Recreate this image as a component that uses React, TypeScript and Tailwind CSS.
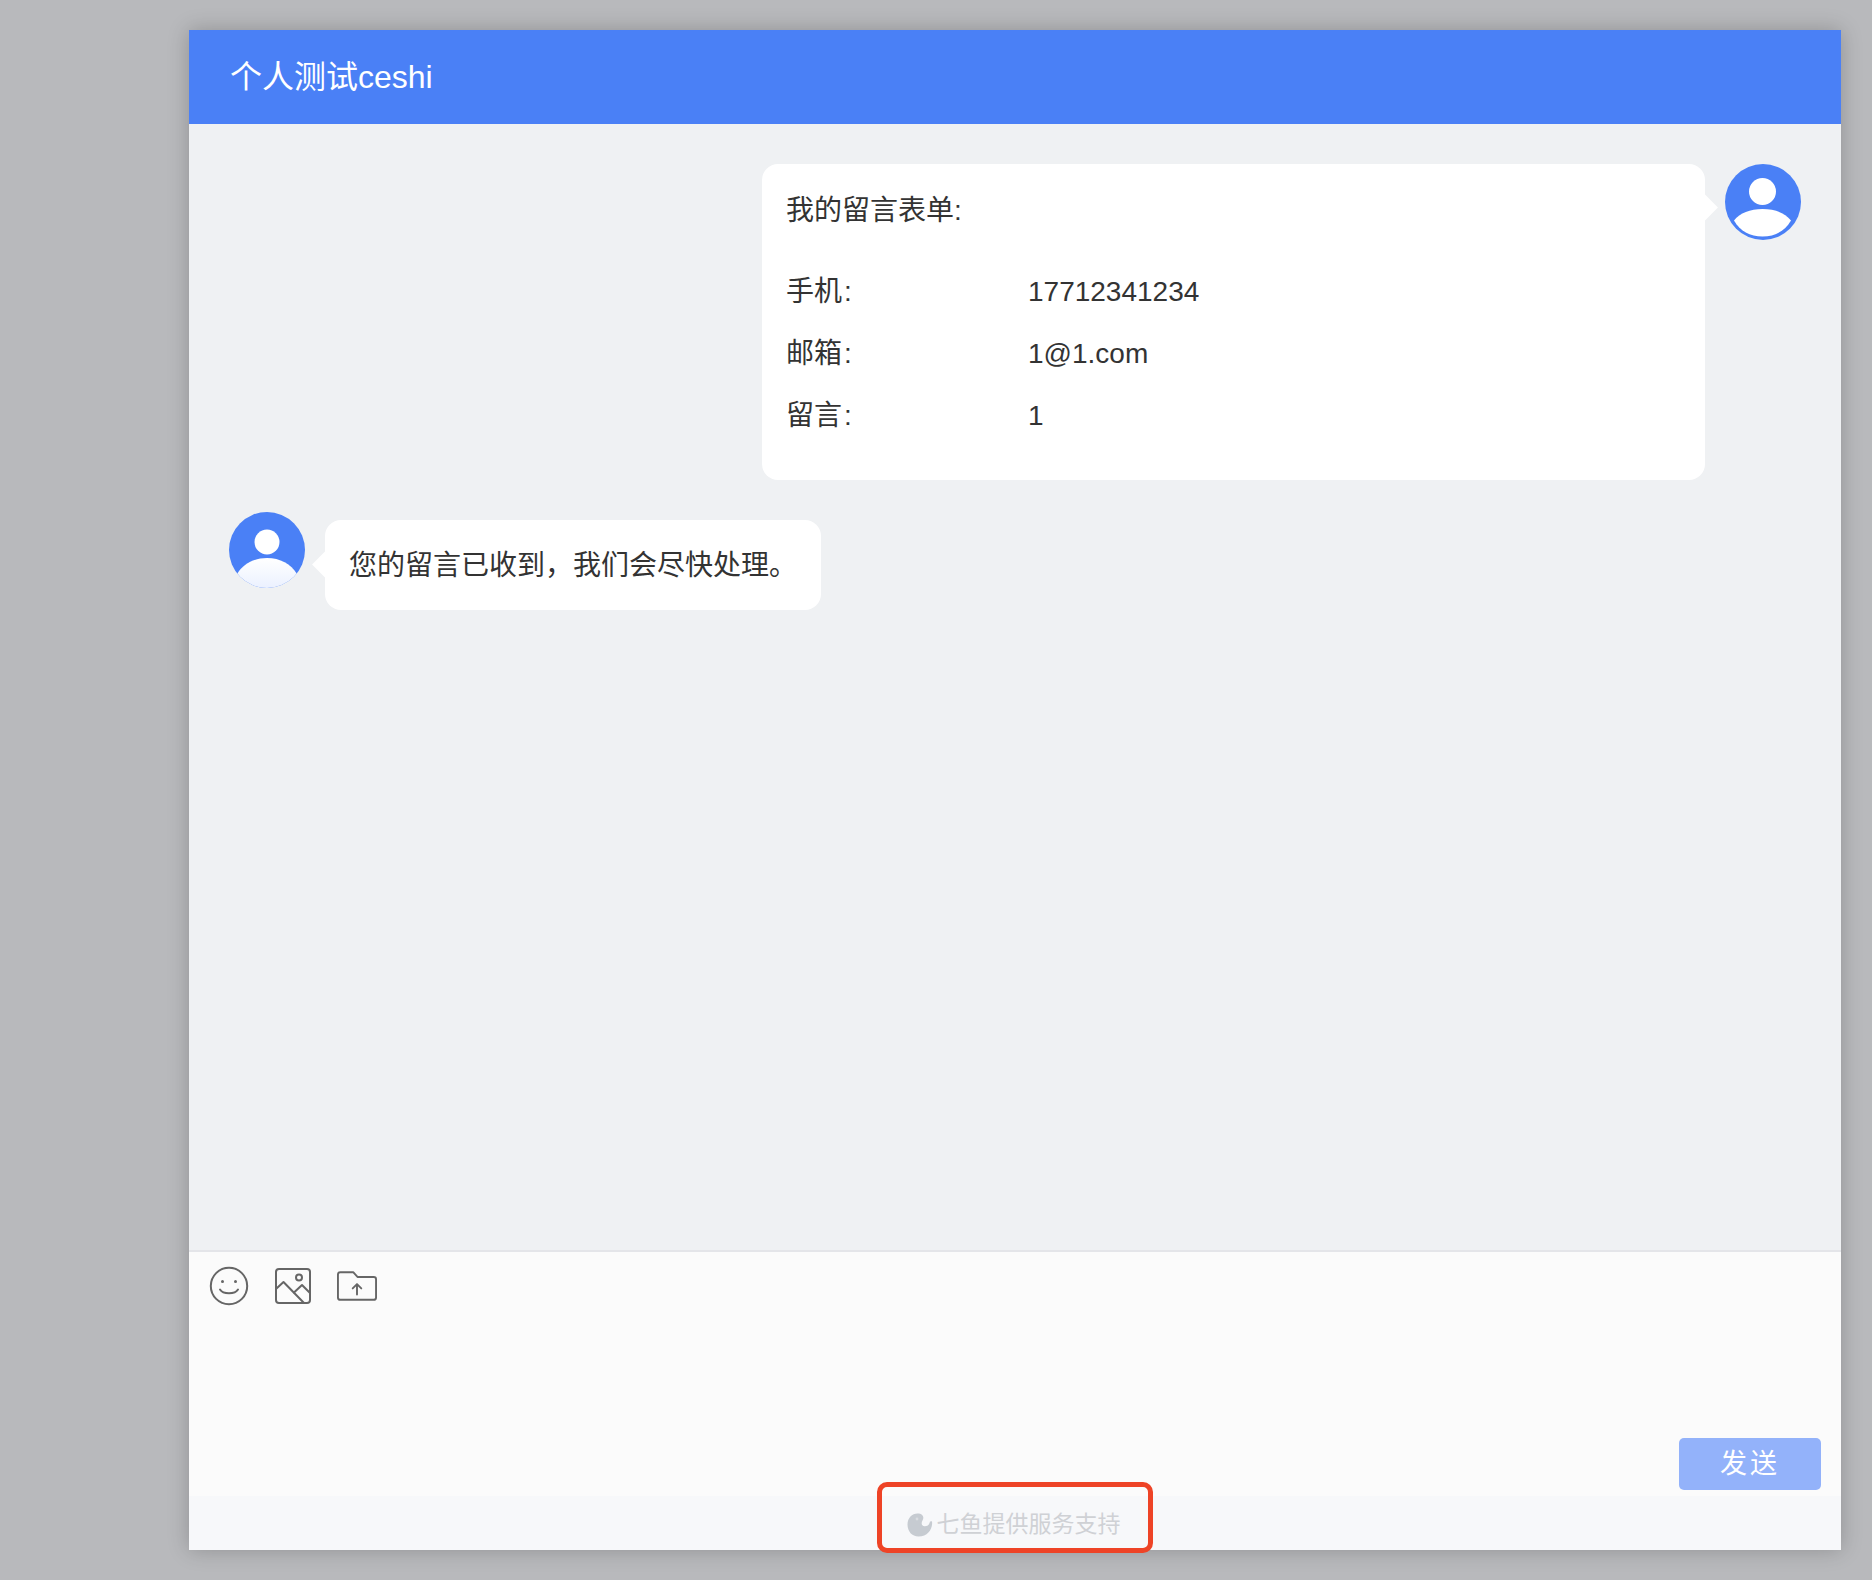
const FONT = "font-['Liberation_Sans','Noto_Sans_CJK_SC',sans-serif]";

function Avatar({ sent }: { sent?: boolean }) {
  return (
    <svg viewBox="0 0 76 76" className="w-[76px] h-[76px] shrink-0">
      <defs>
        <linearGradient id="body-fade" x1="0" y1="0" x2="0" y2="1">
          <stop offset="0" stopColor="#ffffff" />
          <stop offset="1" stopColor="#ebf1ff" />
        </linearGradient>
        <clipPath id="circle-clip">
          <circle cx="38" cy="38" r="38" />
        </clipPath>
      </defs>
      <circle cx="38" cy="38" r="38" fill="#4a80f6" />
      {sent ? (
        <>
          <circle cx="37.5" cy="27.5" r="13.5" fill="#fff" />
          <path d="M9 56.5C15 49 25 45 37.5 45S60 49 66 56.5C60 67 50 72.5 37.5 72.5S15 67 9 56.5Z" fill="#fff" />
        </>
      ) : (
        <>
          <circle cx="38" cy="30" r="12.5" fill="#fff" />
          <path
            d="M8 62C14 52 25 46 38 46S62 52 68 62V76H8Z"
            fill="url(#body-fade)"
            clipPath="url(#circle-clip)"
          />
        </>
      )}
    </svg>
  );
}

function FormRow({ label, value }: { label: string; value: string }) {
  return (
    <div className="flex h-[62px] items-center">
      <span className="w-[242px] shrink-0">
        {label}
        <span className="ml-[2px]">:</span>
      </span>
      <span>{value}</span>
    </div>
  );
}

function SmileIcon() {
  return (
    <svg viewBox="0 0 40 40" className="w-10 h-10" fill="none" stroke="#666" strokeWidth="2" strokeLinecap="round">
      <circle cx="20" cy="20" r="18.2" />
      <circle cx="13.5" cy="15.5" r="1.5" fill="#666" stroke="none" />
      <circle cx="26.5" cy="15.5" r="1.5" fill="#666" stroke="none" />
      <path d="M11 23.5C14 28.5 26 28.5 29 23.5" />
    </svg>
  );
}

function ImageIcon() {
  return (
    <svg viewBox="0 0 36 36" className="w-9 h-9" fill="none" stroke="#666" strokeWidth="2" strokeLinejoin="round" strokeLinecap="round">
      <rect x="1" y="1" width="34" height="34" rx="3" />
      <circle cx="24" cy="9.5" r="3" />
      <path d="M1.5 20.5L8.5 14L29 35" />
      <path d="M19 24.5L27 17L35 25" />
    </svg>
  );
}

function UploadIcon() {
  return (
    <svg viewBox="0 0 42 32" className="w-10 h-8" fill="none" stroke="#666" strokeWidth="2" strokeLinejoin="round" strokeLinecap="round">
      <path d="M1 4C1 2.5 2 1.5 3.5 1.5H17L21.5 6.5H38.5C40 6.5 41 7.5 41 9V28C41 29.5 40 30.5 38.5 30.5H3.5C2 30.5 1 29.5 1 28Z" />
      <path d="M21 25V14M16.5 18.5L21 14L25.5 18.5" />
    </svg>
  );
}

function QiyuLogo() {
  return (
    <svg viewBox="0 0 26 24" className="w-[26px] h-6 shrink-0">
      <path
        d="M10.5 0.5C16 0.5 17.5 4.5 15.5 7.5C14 10 14.5 13 17.5 13.2C20.5 13.4 22.5 11.5 23 8.5L25 8.2C26 15 21.5 23.5 11.5 23.5C5 23.5 0.5 18.5 0.5 11.5C0.5 5 5 0.5 10.5 0.5Z"
        fill="#c6cbd1"
      />
      <circle cx="10" cy="6" r="1.4" fill="#d9dce0" />
    </svg>
  );
}

export default function App() {
  return (
    <div className={`relative min-h-[1580px] bg-[#b8b9bc] pl-[189px] pr-[31px] pt-[30px] pb-[30px] ${FONT}`}>
      <div className="flex h-[1520px] flex-col bg-[#eff1f3] shadow-[0_0_20px_rgba(0,0,0,0.22)]">
        <header className="flex h-[94px] shrink-0 items-center bg-[#4a80f6] pl-[41px] text-[32px] text-white">
          个人测试ceshi
        </header>

        <main className="flex flex-1 flex-col gap-[32px] px-[40px] pt-[40px] text-[28px] text-[#333]">
          <div className="flex justify-end gap-[20px]">
            <div className="relative w-[943px] rounded-[16px] bg-white pl-[24px] pr-[25px] pb-[33px] pt-[16px]">
              <div className="absolute right-[-9px] top-[34px] h-[19px] w-[19px] rotate-45 bg-white" />
              <div className="mb-[19px] flex h-[62px] items-center">我的留言表单:</div>
              <FormRow label="手机" value="17712341234" />
              <FormRow label="邮箱" value="1@1.com" />
              <FormRow label="留言" value="1" />
            </div>
            <Avatar sent />
          </div>

          <div className="flex items-start gap-[20px]">
            <Avatar />
            <div className="relative mt-[8px] flex h-[90px] w-[496px] items-center rounded-[16px] bg-white pl-[24px] pt-[2px]">
              <div className="absolute left-[-9px] top-[35px] h-[19px] w-[19px] rotate-45 bg-white" />
              <span className="relative whitespace-nowrap">您的留言已收到，我们会尽快处理。</span>
            </div>
          </div>
        </main>

        <div className="flex h-[246px] shrink-0 flex-col border-t-2 border-[#e4e5e9] bg-[#fbfbfb] pl-[20px] pr-[20px] pt-[14px]">
          <div className="flex items-center">
            <SmileIcon />
            <div className="ml-[26px]">
              <ImageIcon />
            </div>
            <div className="ml-[26px]">
              <UploadIcon />
            </div>
          </div>
          <div className="mt-auto mb-[6px] flex justify-end">
            <button className="h-[52px] w-[142px] rounded-[5px] bg-[#93b2fa] text-[27px] tracking-[3px] text-white">
              发送
            </button>
          </div>
        </div>

        <footer className="flex h-[54px] shrink-0 items-center justify-center gap-[4px] bg-[#f7f8fa] pr-[3px] pt-[3px] text-[23px] text-[#cfd1d5]">
          <QiyuLogo />
          <span>七鱼提供服务支持</span>
        </footer>
      </div>

      <div className="absolute left-[877px] top-[1482px] h-[71px] w-[276px] rounded-[10px] border-[5px] border-[#ee4326]" />
    </div>
  );
}
